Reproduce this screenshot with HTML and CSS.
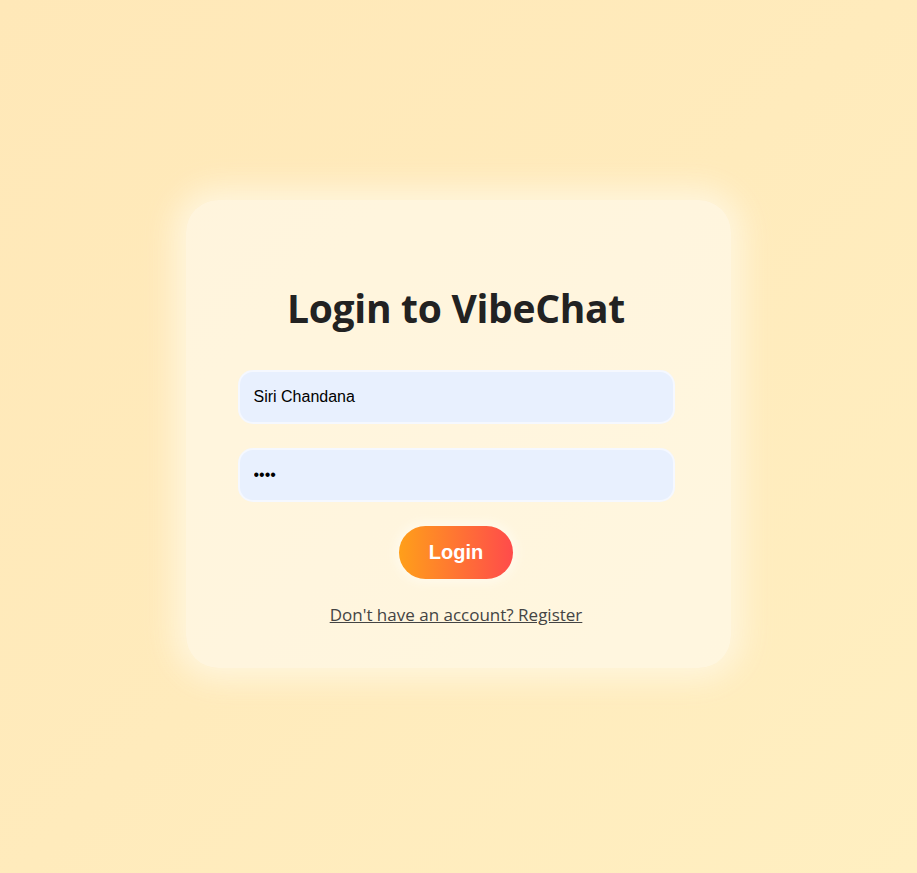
FILE: index.html
```html
<!DOCTYPE html>
<html lang="en">
<head>
<meta charset="utf-8">
<title>Login to VibeChat</title>
<link rel="stylesheet" href="styles.css">
</head>
<body>
<main class="page">
  <form class="card" onsubmit="return false">
    <h2 class="title">Login to VibeChat</h2>
    <input class="field" type="text" value="Siri Chandana">
    <input class="field" type="password" value="siri">
    <button class="btn" type="submit">Login</button>
    <a class="link" href="#">Don't have an account? Register</a>
  </form>
</main>
</body>
</html>
```

FILE: styles.css
```css
* { box-sizing: border-box; }
html, body { height: 100%; }
body {
  margin: 0;
  background: linear-gradient(135deg, #ffe8b8 0%, #ffebbc 50%, #ffefc1 100%);
  font-family: "Open Sans", "Noto Sans", sans-serif;
}
.page {
  min-height: 100%;
  padding: 0 1px 5px 0;
  display: flex;
  align-items: center;
  justify-content: center;
}
.card {
  width: 545px;
  padding: 82px 56px 41px 52px;
  border-radius: 32px;
  background: rgba(255, 255, 255, 0.5);
  box-shadow: 0 0 30px 12px rgba(255, 246, 222, 0.95);
  display: flex;
  flex-direction: column;
  align-items: center;
  gap: 24px;
}
.title {
  margin: 0 0 12px;
  font-family: "Open Sans", "Noto Sans", sans-serif;
  font-size: 39px;
  line-height: 52px;
  font-weight: 700;
  color: #222;
  letter-spacing: -0.3px;
}
.field {
  width: 100%;
  height: 54px;
  padding: 0 14px;
  border: 2px solid rgba(255, 255, 255, 0.55);
  border-radius: 15px;
  background: #e8f0fe;
  font-family: "Liberation Sans", Arial, sans-serif;
  font-size: 16px;
  color: #000;
  outline: none;
}
.btn {
  height: 53px;
  padding: 0 30px;
  border: none;
  border-radius: 30px;
  background: linear-gradient(90deg, #ff9f1a 0%, #ff4b4b 100%);
  color: #fff;
  font-family: "Liberation Sans", Arial, sans-serif;
  font-size: 20px;
  font-weight: 700;
  box-shadow: 0 0 10px 4px rgba(255, 250, 236, 1);
  cursor: pointer;
}
.link {
  font-family: "Open Sans", "Noto Sans", sans-serif;
  font-size: 17px;
  line-height: 24px;
  color: #444;
  text-decoration: underline;
}
```
